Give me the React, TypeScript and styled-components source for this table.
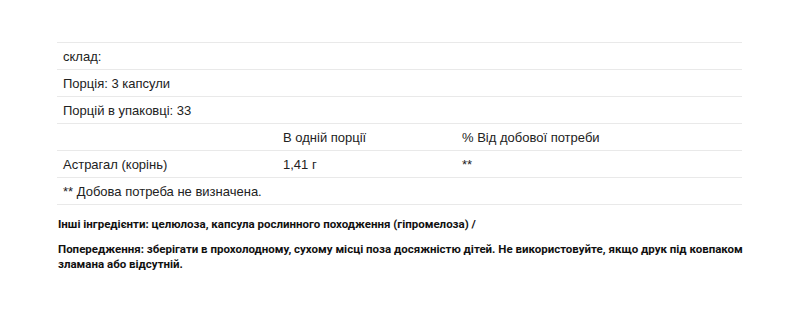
import styled, { createGlobalStyle } from 'styled-components';

const GlobalStyle = createGlobalStyle`
body{
    margin: 0;
    background: #fff;
}
`;

const Page = styled.div`
padding: 42px 68px 0 57px;
`;

const Table = styled.div`
width: 685px;
font-family: "Liberation Sans", Arial, sans-serif;
font-size: 13px;
color: #222;
border-top: 1px solid #e9e9e9;
`;

const Row = styled.div`
display: grid;
grid-template-columns: 220px 179px 1fr;
height: 26px;
align-items: center;
border-bottom: 1px solid #e9e9e9;
`;

const Cell = styled.div<{ $span?: boolean }>`
padding-left: 6px;
white-space: nowrap;
grid-column: ${p => p.$span ? '1 / -1' : 'auto'};
`;

const Notes = styled.div`
width: 720px;
padding-top: 12px;
font-family: Roboto, "Noto Sans", sans-serif;
font-weight: 700;
font-size: 11.5px;
line-height: 15px;
color: #111;
p{
    margin: 0 0 10px 1px;
}
`;

export default function App() {
    return (
        <Page>
            <GlobalStyle />
            <Table>
                <Row><Cell $span>склад:</Cell></Row>
                <Row><Cell $span>Порція: 3 капсули</Cell></Row>
                <Row><Cell $span>Порцій в упаковці: 33</Cell></Row>
                <Row>
                    <Cell></Cell>
                    <Cell>В одній порції</Cell>
                    <Cell>% Від добової потреби</Cell>
                </Row>
                <Row>
                    <Cell>Астрагал (корінь)</Cell>
                    <Cell>1,41 г</Cell>
                    <Cell>**</Cell>
                </Row>
                <Row><Cell $span>** Добова потреба не визначена.</Cell></Row>
            </Table>
            <Notes>
                <p>Інші інгредієнти: целюлоза, капсула рослинного походження (гіпромелоза) /</p>
                <p>Попередження: зберігати в прохолодному, сухому місці поза досяжністю дітей. Не використовуйте, якщо друк під ковпаком зламана або відсутній.</p>
            </Notes>
        </Page>
    );
}
